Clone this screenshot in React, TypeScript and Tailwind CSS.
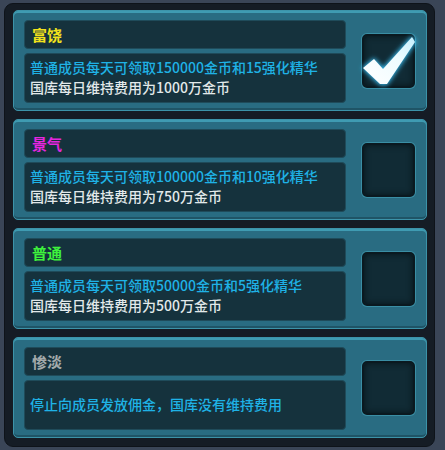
import React from 'react'

// ─── Data ─────────────────────────────────────────────────────────────────────

interface Tier {
  title: string
  titleColor: string
  lines: { text: string; color: string }[]
  checked: boolean
}

const tiers: Tier[] = [
  {
    title: '富饶',
    titleColor: 'text-[#f2e21c]',
    lines: [
      { text: '普通成员每天可领取150000金币和15强化精华', color: 'text-[#1fb2e6]' },
      { text: '国库每日维持费用为1000万金币', color: 'text-[#e2e9ea]' },
    ],
    checked: true,
  },
  {
    title: '景气',
    titleColor: 'text-[#e626e0]',
    lines: [
      { text: '普通成员每天可领取100000金币和10强化精华', color: 'text-[#1fb2e6]' },
      { text: '国库每日维持费用为750万金币', color: 'text-[#e2e9ea]' },
    ],
    checked: false,
  },
  {
    title: '普通',
    titleColor: 'text-[#3ef23c]',
    lines: [
      { text: '普通成员每天可领取50000金币和5强化精华', color: 'text-[#1fb2e6]' },
      { text: '国库每日维持费用为500万金币', color: 'text-[#e2e9ea]' },
    ],
    checked: false,
  },
  {
    title: '惨淡',
    titleColor: 'text-[#a3aaab]',
    lines: [{ text: '停止向成员发放佣金，国库没有维持费用', color: 'text-[#1fb2e6]' }],
    checked: false,
  },
]

// ─── Sub-components ──────────────────────────────────────────────────────────

function CheckMark() {
  return (
    <svg viewBox="0 0 53 54" className="absolute -inset-[2px] w-[53px] h-[54px] overflow-visible">
      <defs>
        <filter id="glow" x="-40%" y="-40%" width="180%" height="180%">
          <feGaussianBlur stdDeviation="2.6" />
        </filter>
        <linearGradient id="ck" x1="0" y1="1" x2="1" y2="0">
          <stop offset="0" stopColor="#ffffff" />
          <stop offset="0.6" stopColor="#effcff" />
          <stop offset="1" stopColor="#c4f0ff" />
        </linearGradient>
      </defs>
      <path d="M0 34 L12 24 L21 34 L50 2 L54 8 L25 51 L18 51 Z" fill="#3cc8ff" filter="url(#glow)" />
      <path d="M1 34 L12 25 L21 35 L50 3 L53 8 L25 50 L18 50 Z" fill="url(#ck)" />
    </svg>
  )
}

function TierCard({ tier }: { tier: Tier }) {
  return (
    <div className="h-[101px] shrink-0 flex items-center rounded-[5px] bg-[#296c82] border border-[#3c93a9] shadow-[inset_0_2px_0_#3f9bb2,inset_0_-2px_0_#1f5466] pl-[10px] pr-[11px]">
      <div className="w-[322px] flex flex-col gap-[4px] pt-[1px]">
        <div className="h-[29px] flex items-center rounded-[4px] bg-[#15323d] border border-[#1f4b5a] pl-[7px]">
          <span className={`text-[15px] font-bold leading-none ${tier.titleColor}`}>{tier.title}</span>
        </div>
        <div className="h-[50px] flex flex-col justify-center gap-[3px] rounded-[4px] bg-[#15323d] border border-[#1f4b5a] pl-[5px]">
          {tier.lines.map((l) => (
            <span key={l.text} className={`text-[14px] leading-[17px] font-medium whitespace-nowrap ${l.color}`}>
              {l.text}
            </span>
          ))}
        </div>
      </div>
      <div className="ml-[16px] relative w-[53px] h-[54px] rounded-[5px] bg-[#112b35] border-2 border-[#0a1920] shadow-[inset_0_0_6px_#071318,0_0_0_1px_#3a8ea4]">
        {tier.checked && <CheckMark />}
      </div>
    </div>
  )
}

// ─── Page ────────────────────────────────────────────────────────────────────

export default function App() {
  return (
    <div
      className="w-[445px] h-[450px] bg-[#3a4557] pl-[4px] pt-[3px] pr-[10px] pb-[3px]"
      style={{ fontFamily: '"Noto Sans CJK SC", "Noto Sans", sans-serif' }}
    >
      <div className="h-full flex flex-col gap-[8px] rounded-[9px] bg-[#151c25] border border-[#0e131a] pl-[8px] pt-[6px] pr-[7px] pb-[8px]">
        {tiers.map((t) => (
          <TierCard key={t.title} tier={t} />
        ))}
      </div>
    </div>
  )
}
